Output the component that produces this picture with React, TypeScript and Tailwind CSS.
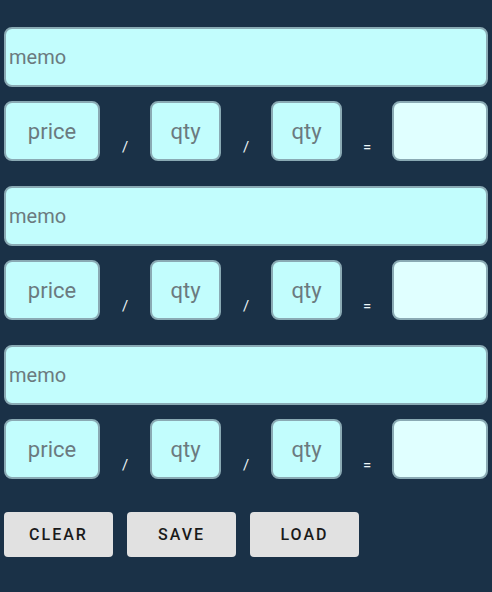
const field =
  "h-[60px] rounded-[8px] border-2 border-[#8aaab4] bg-[#c2fdfd] text-[#6b7a7f]";

function Sep({ char }: { char: string }) {
  return (
    <span className="flex w-[50px] shrink-0 items-end justify-center pb-[6px] text-[15px] leading-none text-[#eef6f8]">
      {char}
    </span>
  );
}

function Entry() {
  return (
    <div className="flex flex-col gap-[14px]">
      <div className={`${field} flex w-[484px] items-center pl-[3px] text-[20px]`}>memo</div>
      <div className="flex">
        <div className={`${field} flex w-[96px] items-center justify-center text-[22px]`}>price</div>
        <Sep char="/" />
        <div className={`${field} flex w-[71px] items-center justify-center text-[22px]`}>qty</div>
        <Sep char="/" />
        <div className={`${field} flex w-[71px] items-center justify-center text-[22px]`}>qty</div>
        <Sep char="=" />
        <div className="h-[60px] w-[96px] rounded-[8px] border-2 border-[#8aaab4] bg-[#e0ffff]" />
      </div>
    </div>
  );
}

export default function App() {
  return (
    <div
      className="flex h-[592px] w-[492px] flex-col bg-[#1a3147] pl-[4px] pt-[27px]"
      style={{ fontFamily: "Roboto, 'Liberation Sans', sans-serif" }}
    >
      <div className="flex flex-col gap-[25px]">
        <Entry />
        <Entry />
        <Entry />
      </div>
      <div className="mt-[33px] flex gap-[14px]">
        {["CLEAR", "SAVE", "LOAD"].map((label) => (
          <button
            key={label}
            type="button"
            className="h-[45px] w-[109px] rounded-[4px] bg-[#e1e1e1] text-[16px] font-medium tracking-[2px] text-[#1a1a1a]"
          >
            {label}
          </button>
        ))}
      </div>
    </div>
  );
}
